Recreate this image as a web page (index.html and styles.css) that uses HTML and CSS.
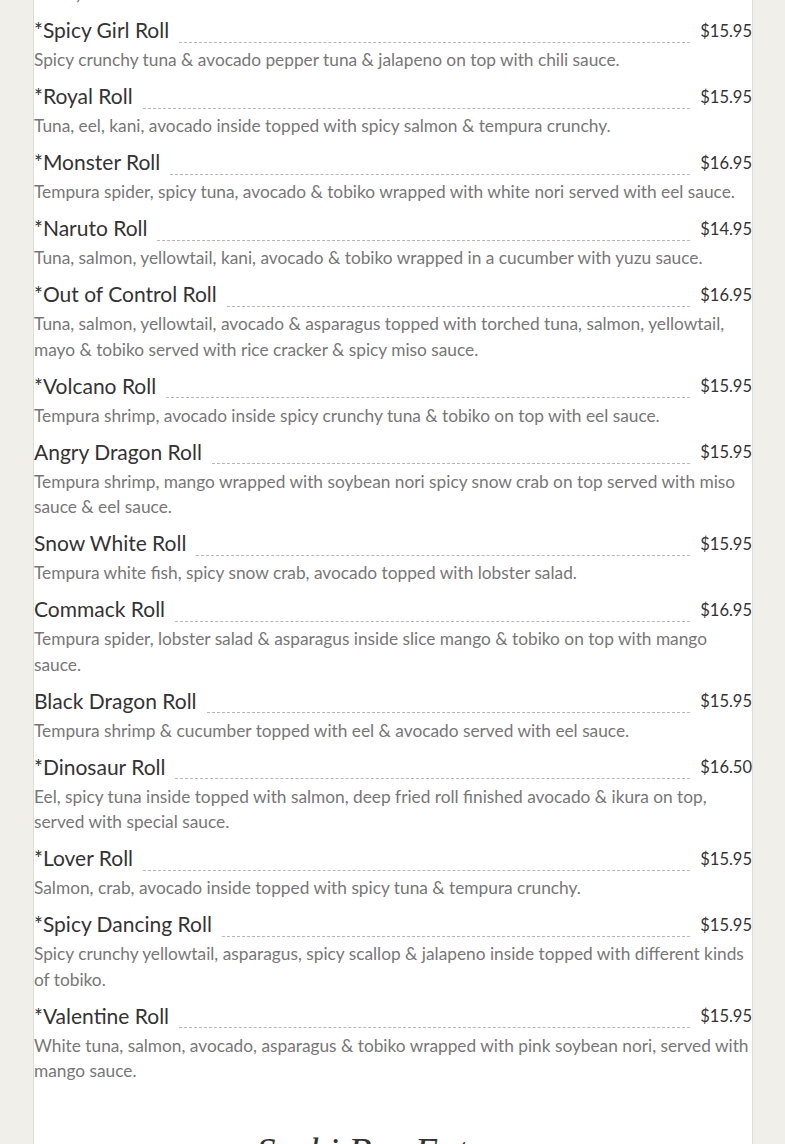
FILE: index.html
```html
<!DOCTYPE html>
<html>
<head>
<meta charset="utf-8">
<link rel="stylesheet" href="styles.css">
</head>
<body>
<div class="page">
  <div class="menu">
    <div class="item item-cut">
      <p class="desc">sauce).</p>
    </div>
    <div class="item">
      <div class="line"><span class="name">*Spicy Girl Roll</span><span class="leader"></span><span class="price">$15.95</span></div>
      <p class="desc">Spicy crunchy tuna &amp; avocado pepper tuna &amp; jalapeno on top with chili sauce.</p>
    </div>
    <div class="item">
      <div class="line"><span class="name">*Royal Roll</span><span class="leader"></span><span class="price">$15.95</span></div>
      <p class="desc">Tuna, eel, kani, avocado inside topped with spicy salmon &amp; tempura crunchy.</p>
    </div>
    <div class="item">
      <div class="line"><span class="name">*Monster Roll</span><span class="leader"></span><span class="price">$16.95</span></div>
      <p class="desc">Tempura spider, spicy tuna, avocado &amp; tobiko wrapped with white nori served with eel sauce.</p>
    </div>
    <div class="item">
      <div class="line"><span class="name">*Naruto Roll</span><span class="leader"></span><span class="price">$14.95</span></div>
      <p class="desc">Tuna, salmon, yellowtail, kani, avocado &amp; tobiko wrapped in a cucumber with yuzu sauce.</p>
    </div>
    <div class="item">
      <div class="line"><span class="name">*Out of Control Roll</span><span class="leader"></span><span class="price">$16.95</span></div>
      <p class="desc">Tuna, salmon, yellowtail, avocado &amp; asparagus topped with torched tuna, salmon, yellowtail, mayo &amp; tobiko served with rice cracker &amp; spicy miso sauce.</p>
    </div>
    <div class="item">
      <div class="line"><span class="name">*Volcano Roll</span><span class="leader"></span><span class="price">$15.95</span></div>
      <p class="desc">Tempura shrimp, avocado inside spicy crunchy tuna &amp; tobiko on top with eel sauce.</p>
    </div>
    <div class="item">
      <div class="line"><span class="name">Angry Dragon Roll</span><span class="leader"></span><span class="price">$15.95</span></div>
      <p class="desc">Tempura shrimp, mango wrapped with soybean nori spicy snow crab on top served with miso sauce &amp; eel sauce.</p>
    </div>
    <div class="item">
      <div class="line"><span class="name">Snow White Roll</span><span class="leader"></span><span class="price">$15.95</span></div>
      <p class="desc">Tempura white fish, spicy snow crab, avocado topped with lobster salad.</p>
    </div>
    <div class="item">
      <div class="line"><span class="name">Commack Roll</span><span class="leader"></span><span class="price">$16.95</span></div>
      <p class="desc">Tempura spider, lobster salad &amp; asparagus inside slice mango &amp; tobiko on top with mango sauce.</p>
    </div>
    <div class="item">
      <div class="line"><span class="name">Black Dragon Roll</span><span class="leader"></span><span class="price">$15.95</span></div>
      <p class="desc">Tempura shrimp &amp; cucumber topped with eel &amp; avocado served with eel sauce.</p>
    </div>
    <div class="item">
      <div class="line"><span class="name">*Dinosaur Roll</span><span class="leader"></span><span class="price">$16.50</span></div>
      <p class="desc">Eel, spicy tuna inside topped with salmon, deep fried roll finished avocado &amp; ikura on top, served with special sauce.</p>
    </div>
    <div class="item">
      <div class="line"><span class="name">*Lover Roll</span><span class="leader"></span><span class="price">$15.95</span></div>
      <p class="desc">Salmon, crab, avocado inside topped with spicy tuna &amp; tempura crunchy.</p>
    </div>
    <div class="item">
      <div class="line"><span class="name">*Spicy Dancing Roll</span><span class="leader"></span><span class="price">$15.95</span></div>
      <p class="desc">Spicy crunchy yellowtail, asparagus, spicy scallop &amp; jalapeno inside topped with different kinds of tobiko.</p>
    </div>
    <div class="item">
      <div class="line"><span class="name">*Valentine Roll</span><span class="leader"></span><span class="price">$15.95</span></div>
      <p class="desc">White tuna, salmon, avocado, asparagus &amp; tobiko wrapped with pink soybean nori, served with mango sauce.</p>
    </div>
  </div>
  <h2 class="section-title">Sushi Bar Entrees</h2>
</div>
</body>
</html>
```

FILE: styles.css
```css
html, body {
  margin: 0;
  padding: 0;
}
body {
  background: #f0efe9;
  font-family: Lato, "Open Sans", sans-serif;
  overflow: hidden;
}
.page {
  width: 718px;
  margin-left: 33px;
  background: #fff;
  border-left: 1px solid #dcdcd8;
  border-right: 1px solid #dcdcd8;
  min-height: 1200px;
  margin-top: -19px;
}
.menu {
  display: flex;
  flex-direction: column;
}
.item {
  margin-bottom: 5.5px;
}
.line {
  display: flex;
  align-items: center;
  height: 33px;
  margin-bottom: 2px;
}
.name {
  font-size: 21px;
  color: #333;
  white-space: nowrap;
  margin-top: 2px;
}
.leader {
  flex: 1;
  align-self: stretch;
  border-bottom: 1px dashed #b8b8b8;
  margin: 0 10px 2.5px 10px;
}
.price {
  font-size: 16.5px;
  color: #333;
  white-space: nowrap;
  margin-top: 4px;
}
.desc {
  margin: 0;
  font-size: 17.3px;
  line-height: 25.5px;
  color: #777;
}
.section-title {
  margin: 40px 0 0 0;
  text-align: center;
  font-family: "Liberation Serif", serif;
  font-style: italic;
  font-weight: normal;
  font-size: 38px;
  color: #333;
}
```
